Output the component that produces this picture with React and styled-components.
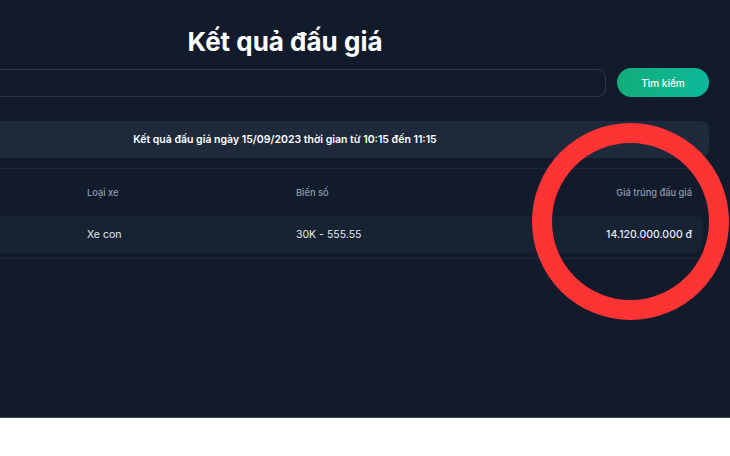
import React from "react";
import styled, { createGlobalStyle } from "styled-components";

const Global = createGlobalStyle`
  html, body { margin: 0; padding: 0; background: #ffffff; }
  body { font-family: Inter, "Noto Sans", "Liberation Sans", sans-serif; overflow: hidden; }
  * { box-sizing: border-box; }
`;

const Page = styled.div`
  position: relative;
  height: 418px;
  background: #111b2b;
  border-bottom: 1px solid #3c4551;
  overflow: hidden;
`;

const Container = styled.div`
  width: 848px;
  margin-left: -139px;
  padding-top: 24px;
  display: flex;
  flex-direction: column;
`;

const Title = styled.h1`
  margin: 0;
  font-size: 26px;
  line-height: 36px;
  font-weight: 700;
  color: #ffffff;
  text-align: center;
`;

const SearchRow = styled.div`
  margin-top: 8px;
  display: flex;
  align-items: center;
  gap: 11px;
`;

const SearchInput = styled.input`
  flex: 1;
  height: 28px;
  border: 1px solid #2d3849;
  border-radius: 8px;
  background: transparent;
  color: #e2e8f0;
  padding: 0 12px;
  font-family: inherit;
  font-size: 11px;
  outline: none;
`;

const SearchButton = styled.button`
  width: 92px;
  height: 29px;
  border: none;
  border-radius: 15px;
  background: linear-gradient(90deg, #12ad78 0%, #0db89b 100%);
  color: #ffffff;
  font-family: inherit;
  font-size: 10px;
  font-weight: 500;
  cursor: pointer;
`;

const Banner = styled.div`
  margin-top: 24px;
  height: 37px;
  border-radius: 8px;
  background: #1e293b;
  color: #ffffff;
  font-size: 10.5px;
  font-weight: 600;
  display: flex;
  align-items: center;
  justify-content: center;
`;

const Table = styled.div`
  margin-top: 10px;
  border-top: 1px solid #1d2738;
  border-bottom: 1px solid #1d2738;
  padding: 0 6px 5px 0;
`;

const Row = styled.div`
  display: grid;
  grid-template-columns: 215px 209px 209px 1fr;
  align-items: center;
  padding: 0 11px;
  height: ${(p) => (p.$head ? "47px" : "37px")};
  background: ${(p) => (p.$head ? "transparent" : "#172232")};
  border-radius: 8px;
`;

const Cell = styled.div`
  font-size: ${(p) => (p.$head ? "9.3px" : "10.5px")};
  font-weight: ${(p) => (p.$head ? 500 : p.$strong ? 500 : 400)};
  color: ${(p) => (p.$head ? "#8e9bb0" : "#e6ebf2")};
  text-align: ${(p) => (p.$right ? "right" : "left")};
  white-space: nowrap;
`;

const Circle = styled.div`
  position: absolute;
  left: 532px;
  top: 123px;
  width: 197px;
  height: 197px;
  border: 20px solid #fe3434;
  border-radius: 50%;
  pointer-events: none;
`;

export default function App() {
  return (
    <>
      <Global />
      <Page>
        <Container>
          <Title>Kết quả đấu giá</Title>
          <SearchRow>
            <SearchInput />
            <SearchButton>Tìm kiếm</SearchButton>
          </SearchRow>
          <Banner>Kết quả đấu giá ngày 15/09/2023 thời gian từ 10:15 đến 11:15</Banner>
          <Table>
            <Row $head>
              <Cell $head />
              <Cell $head>Loại xe</Cell>
              <Cell $head>Biến số</Cell>
              <Cell $head $right>Giá trúng đấu giá</Cell>
            </Row>
            <Row>
              <Cell />
              <Cell>Xe con</Cell>
              <Cell>30K - 555.55</Cell>
              <Cell $right $strong>14.120.000.000 đ</Cell>
            </Row>
          </Table>
        </Container>
        <Circle />
      </Page>
    </>
  );
}
